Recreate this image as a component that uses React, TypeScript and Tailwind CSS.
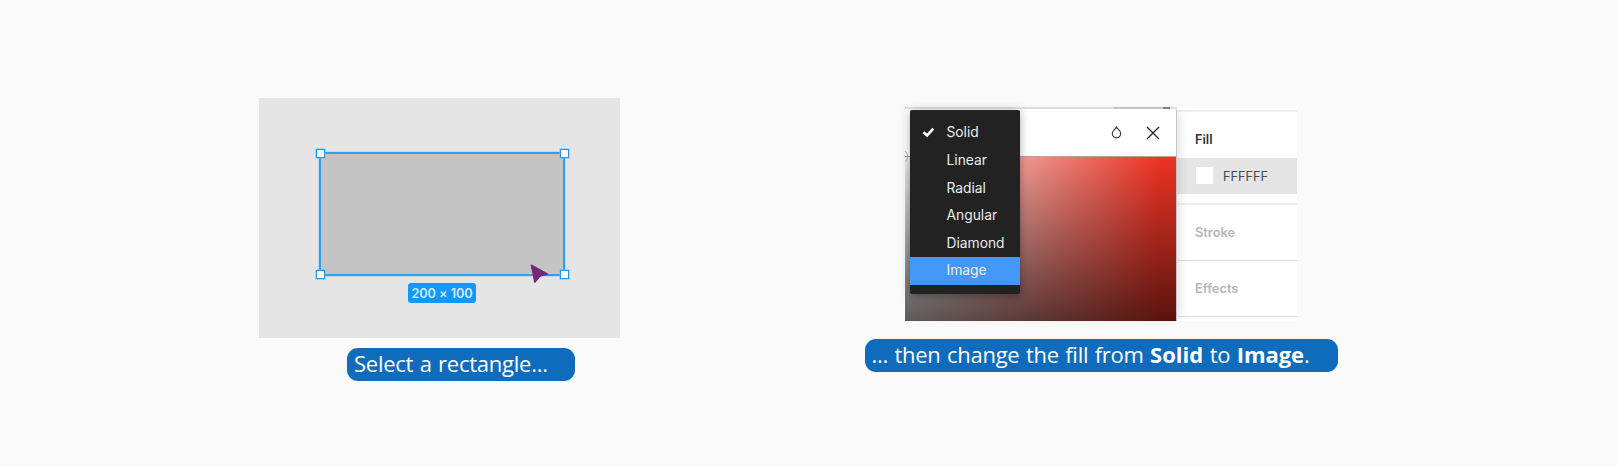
const fillTypes = ['Solid', 'Linear', 'Radial', 'Angular', 'Diamond', 'Image'];

const handlePositions = [
  '-left-[5.5px] -top-[5.5px]',
  '-right-[5.5px] -top-[5.5px]',
  '-left-[5.5px] -bottom-[5.5px]',
  '-right-[5.5px] -bottom-[5.5px]',
];

function SelectedRectangle() {
  return (
    <div className="relative ml-[60.5px] mt-[54px] h-[123.5px] w-[246px] border-2 border-[#2f9fee] bg-[#c4c4c4] shadow-[0_0_0_0.5px_#9fcdf2]">
      {handlePositions.map((position) => (
        <span key={position} className={`absolute size-[9px] border border-[#189bff] bg-white shadow-[0_0_0_0.5px_#70bfff] ${position}`} />
      ))}
      <svg className="absolute left-[209px] top-[110px]" width="20" height="22" viewBox="0 0 20 22">
        <path d="M1.4 1.2 17.6 10 10 12 4.8 18.2Z" fill="#76287a" stroke="#76287a" strokeWidth="1.4" strokeLinejoin="round" />
      </svg>
    </div>
  );
}

function CanvasStep() {
  return (
    <section className="ml-[258.5px] mt-[98px] w-[361.5px] shrink-0">
      <div className="flex h-[240px] flex-col bg-[#e5e5e5]">
        <SelectedRectangle />
        <div className="ml-[149.5px] mt-[7.5px] flex h-[20px] w-[68px] items-center justify-center rounded-[3px] bg-[#1299ff] pt-px font-['Inter',sans-serif] text-[12.7px] font-semibold tracking-[-0.05px] whitespace-nowrap text-[#cfeaff]">
          200 × 100
        </div>
      </div>
      <div className="ml-[88.5px] mt-[10px] flex h-[33px] w-[228px] items-center rounded-[11px] bg-[#0f6cbd] pb-[3px] pl-[7px] font-['Open_Sans',sans-serif] text-[22px] tracking-[-0.25px] [word-spacing:1px] whitespace-nowrap text-white">
        Select a rectangle...
      </div>
    </section>
  );
}

function FillTypeMenu() {
  return (
    <ul className="absolute left-[4.5px] top-[2.5px] h-[184px] w-[110.5px] rounded-[2px] bg-[#222] pt-[9.5px] font-['Inter',sans-serif] text-[13.8px] text-[#ececec] shadow-[0_2px_10px_rgba(0,0,0,0.35)]">
      {fillTypes.map((type) => (
        <li key={type} className={`flex h-[27.6px] items-center ${type === 'Image' ? 'bg-[#4597f7]' : ''}`}>
          <span className="flex w-[37px] pl-[12px]">
            {type === 'Solid' && (
              <svg width="13" height="11" viewBox="0 0 13 11" fill="none">
                <path d="m1.5 5.2 3.6 3.3L11.3 1.7" stroke="white" strokeWidth="2.6" />
              </svg>
            )}
          </span>
          {type}
        </li>
      ))}
    </ul>
  );
}

function ColorPicker() {
  return (
    <div className="relative z-10 flex w-[271.5px] shrink-0 flex-col">
      <div className="flex h-[2px] bg-[#e2e2e2]">
        <span className="ml-[209px] w-[49px] bg-[#c8c8c8]" />
        <span className="w-[7px] bg-[#858585]" />
      </div>
      <div className="flex h-[211.5px] flex-col overflow-hidden rounded-tr-[2px] border-r border-[#c4c4c4] bg-white shadow-[6px_0_10px_-4px_rgba(0,0,0,0.13)]">
        <div className="flex h-[47px] shrink-0 items-center pl-[206px]">
          <svg width="11" height="13" viewBox="0 0 11 13" fill="none" stroke="#333" strokeWidth="1.2">
            <path d="M5.5 1.2C4.7 2.8 1.3 4.2 1.3 7.6a4.2 4.2 0 0 0 8.4 0C9.7 4.2 6.3 2.8 5.5 1.2Z" />
          </svg>
          <svg className="ml-[24px]" width="14" height="14" viewBox="0 0 14 14" fill="none" stroke="#222" strokeWidth="1.3">
            <path d="m1 1 12 12M13 1 1 13" />
          </svg>
        </div>
        <div className="grow border-t border-[#bda09c] bg-[linear-gradient(to_bottom,rgba(0,0,0,0)_0%,rgba(0,0,0,0.62)_100%),linear-gradient(to_right,#f0f0f0_0%,#ed3324_94%)]" />
      </div>
      <svg className="absolute left-0 top-[43px]" width="5" height="13" viewBox="0 0 5 13" fill="none" stroke="#b5b5b5">
        <path d="M0 1.2c3.2 1.5 3.2 9 0 10.6" />
      </svg>
      <FillTypeMenu />
    </div>
  );
}

function Inspector() {
  return (
    <div className="flex grow flex-col bg-white font-['Inter',sans-serif] text-[12.8px] font-semibold text-[#b6b6b6]">
      <div className="mt-[3px] flex h-[47.5px] items-center border-t-2 border-[#eee] pl-[18.5px] pt-[9px] text-[#333]">Fill</div>
      <div className="flex h-[36.5px] items-center bg-[#e5e5e5] pl-[19.5px] text-[12.7px] font-normal text-[#484848]">
        <span className="mr-[10px] size-[17px] bg-white" />
        <span className="pt-px">FFFFFF</span>
      </div>
      <div className="mt-[9px] flex h-[57px] items-center border-t-2 border-[#eee] pl-[18.5px]">Stroke</div>
      <div className="flex h-[56px] items-center border-t border-[#ddd] pl-[18.5px]">Effects</div>
      <div className="border-t border-[#ddd]" />
    </div>
  );
}

function FillStep() {
  return (
    <section className="ml-[244.5px] mt-[107px] w-[473.5px] shrink-0">
      <div className="ml-[40.5px] flex h-[214px] w-[391.5px]">
        <ColorPicker />
        <Inspector />
      </div>
      <div className="mt-[18px] flex h-[33px] items-center rounded-[11px] bg-[#0f6cbd] pb-[3px] pl-[7px] font-['Open_Sans',sans-serif] text-[22px] tracking-[-0.27px] [word-spacing:1px] whitespace-pre text-white">
        <span>... then change the fill from <b className="tracking-[0.05px]">Solid</b> to <b className="tracking-[-0.1px]">Image</b>.</span>
      </div>
    </section>
  );
}

export default function App() {
  return (
    <main className="flex h-[467px] w-[1617px] items-start overflow-hidden bg-[#fafafa]">
      <CanvasStep />
      <FillStep />
    </main>
  );
}
